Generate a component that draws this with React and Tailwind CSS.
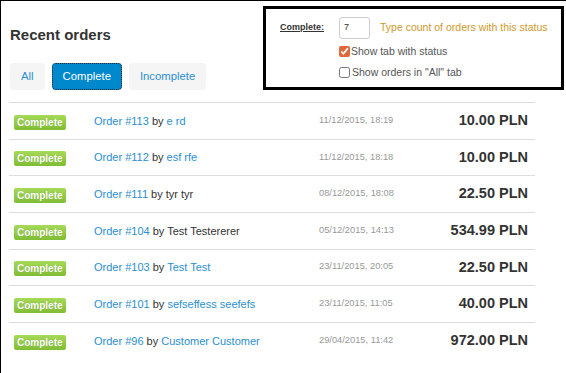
import React from 'react';

const orders = [
  { id: 113, who: 'e rd', whoLink: true, date: '11/12/2015, 18:19', total: '10.00 PLN' },
  { id: 112, who: 'esf rfe', whoLink: true, date: '11/12/2015, 18:18', total: '10.00 PLN' },
  { id: 111, who: 'tyr tyr', whoLink: false, date: '08/12/2015, 18:08', total: '22.50 PLN' },
  { id: 104, who: 'Test Testererer', whoLink: false, date: '05/12/2015, 14:13', total: '534.99 PLN' },
  { id: 103, who: 'Test Test', whoLink: true, date: '23/11/2015, 20:05', total: '22.50 PLN' },
  { id: 101, who: 'sefseffess seefefs', whoLink: true, date: '23/11/2015, 11:05', total: '40.00 PLN' },
  { id: 96, who: 'Customer Customer', whoLink: true, date: '29/04/2015, 11:42', total: '972.00 PLN' },
];

const Tab = ({ label, active }) => (
  <button
    className={
      active
        ? 'h-[27px] rounded-[4px] border border-dotted border-[#222] bg-[#0088cc] px-[10px] text-[11.3px] text-white'
        : 'h-[27px] rounded-[4px] border border-transparent bg-[#f5f5f5] px-[10px] text-[11.3px] text-[#2a8fd1]'
    }
  >
    {label}
  </button>
);

const OrderRow = ({ order }) => (
  <div className="flex h-[36.67px] items-center border-t border-[#dddddd]">
    <span className="ml-[5px] w-[80px] shrink-0">
      <span className="inline-block rounded-[2px] bg-gradient-to-b from-[#a6da58] to-[#80bd33] px-[3px] text-[10px] font-bold leading-[15px] text-white [text-shadow:0_0_1px_rgba(0,0,0,0.2)]">
        Complete
      </span>
    </span>
    <span className="w-[225px] shrink-0 text-[11px] text-[#333]">
      <a className="text-[#2a8fd1]">Order #{order.id}</a> by{' '}
      {order.whoLink ? <a className="text-[#2a8fd1]">{order.who}</a> : order.who}
    </span>
    <span className="text-[9.3px] text-[#999]">{order.date}</span>
    <span className="ml-auto mr-[7px] text-[14.5px] font-bold text-[#333]">{order.total}</span>
  </div>
);

export default function App() {
  return (
    <div className="relative h-[373px] w-[566px] overflow-hidden border-l border-t border-black bg-white font-['Liberation_Sans',Arial,sans-serif]">
      <div className="pl-[8px] pt-[25px]">
        <h2 className="ml-[1px] text-[15px] font-bold leading-[18px] text-[#333]">Recent orders</h2>
        <div className="ml-[1px] mt-[19px] flex gap-[7px]">
          <Tab label="All" />
          <Tab label="Complete" active />
          <Tab label="Incomplete" />
        </div>
        <div className="mt-[12px] w-[526px]">
          {orders.map((o) => (
            <OrderRow key={o.id} order={o} />
          ))}
        </div>
      </div>

      <div className="absolute left-[262px] top-[5px] h-[84px] w-[301px] border-[3px] border-black bg-white">
        <div className="flex items-center pl-[14px] pt-[8px]">
          <span className="w-[59px] text-[9px] font-bold text-[#333] underline">Complete:</span>
          <span className="flex h-[22px] w-[31px] items-center rounded-[3px] border border-[#cccccc] pl-[4px] text-[9px] text-[#333]">
            7
          </span>
          <span className="ml-[10px] text-[10.5px] text-[#d09a2a]">Type count of orders with this status</span>
        </div>
        <label className="mt-[5px] flex items-center pl-[73px] text-[10.5px] text-[#555]">
          <input type="checkbox" defaultChecked className="m-0 h-[11px] w-[11px] accent-[#e0693c]" />
          <span className="ml-[1px]">Show tab with status</span>
        </label>
        <label className="mt-[5px] flex items-center pl-[73px] text-[10.5px] text-[#555]">
          <input type="checkbox" className="m-0 h-[11px] w-[11px]" />
          <span className="ml-[2px]">Show orders in "All" tab</span>
        </label>
      </div>
    </div>
  );
}
